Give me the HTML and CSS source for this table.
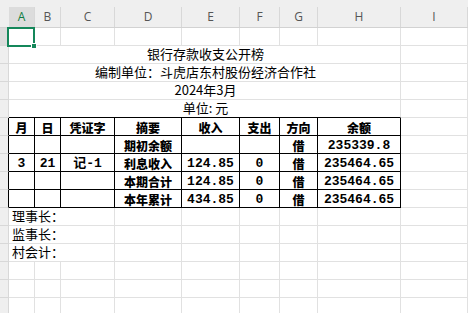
FILE: index.html
```html
<!DOCTYPE html>
<html>
<head>
<meta charset="utf-8">
<link rel="stylesheet" href="styles.css">
</head>
<body>
<div class="sheet">
  <!-- header -->
  <div class="corner"></div>
  <div class="ch act"><div class="lbl">A</div></div>
  <div class="ch"><div class="lbl">B</div></div>
  <div class="ch"><div class="lbl">C</div></div>
  <div class="ch"><div class="lbl">D</div></div>
  <div class="ch"><div class="lbl">E</div></div>
  <div class="ch"><div class="lbl">F</div></div>
  <div class="ch"><div class="lbl">G</div></div>
  <div class="ch"><div class="lbl">H</div></div>
  <div class="ch"><div class="lbl">I</div></div>

  <!-- row 1 -->
  <div class="rh act"></div>
  <div class="c a1"><div class="selbox"><div class="handle"></div></div></div>
  <div class="c"></div><div class="c"></div><div class="c"></div><div class="c"></div><div class="c"></div><div class="c"></div><div class="c"></div><div class="c"></div>

  <!-- row 2 -->
  <div class="rh"></div>
  <div class="c m ttl">银行存款收支公开榜</div>
  <div class="c"></div>
  <!-- row 3 -->
  <div class="rh"></div>
  <div class="c m ttl">编制单位：斗虎店东村股份经济合作社</div>
  <div class="c"></div>
  <!-- row 4 -->
  <div class="rh"></div>
  <div class="c m ttl">2024年3月</div>
  <div class="c"></div>
  <!-- row 5 -->
  <div class="rh"></div>
  <div class="c m ttl last">单位: 元</div>
  <div class="c"></div>

  <!-- row 6 table header -->
  <div class="rh tb"></div>
  <div class="t">月</div><div class="t">日</div><div class="t">凭证字</div><div class="t">摘要</div><div class="t">收入</div><div class="t">支出</div><div class="t">方向</div><div class="t">余额</div>
  <div class="c"></div>
  <!-- row 7 -->
  <div class="rh tb"></div>
  <div class="t"></div><div class="t"></div><div class="t"></div><div class="t">期初余额</div><div class="t"></div><div class="t"></div><div class="t">借</div><div class="t num">235339.8</div>
  <div class="c"></div>
  <!-- row 8 -->
  <div class="rh tb"></div>
  <div class="t num">3</div><div class="t num">21</div><div class="t num">记-1</div><div class="t">利息收入</div><div class="t num">124.85</div><div class="t num">0</div><div class="t">借</div><div class="t num">235464.65</div>
  <div class="c"></div>
  <!-- row 9 -->
  <div class="rh tb"></div>
  <div class="t"></div><div class="t"></div><div class="t"></div><div class="t">本期合计</div><div class="t num">124.85</div><div class="t num">0</div><div class="t">借</div><div class="t num">235464.65</div>
  <div class="c"></div>
  <!-- row 10 -->
  <div class="rh tb"></div>
  <div class="t"></div><div class="t"></div><div class="t"></div><div class="t">本年累计</div><div class="t num">434.85</div><div class="t num">0</div><div class="t">借</div><div class="t num">235464.65</div>
  <div class="c"></div>

  <!-- row 11 -->
  <div class="rh"></div>
  <div class="c sig">理事长：</div>
  <div class="c"></div><div class="c"></div><div class="c"></div><div class="c"></div><div class="c"></div><div class="c"></div>
  <!-- row 12 -->
  <div class="rh"></div>
  <div class="c sig">监事长：</div>
  <div class="c"></div><div class="c"></div><div class="c"></div><div class="c"></div><div class="c"></div><div class="c"></div>
  <!-- row 13 -->
  <div class="rh"></div>
  <div class="c sig">村会计：</div>
  <div class="c"></div><div class="c"></div><div class="c"></div><div class="c"></div><div class="c"></div><div class="c"></div>

  <!-- rows 14-16 -->
  <div class="rh"></div>
  <div class="c"></div><div class="c"></div><div class="c"></div><div class="c"></div><div class="c"></div><div class="c"></div><div class="c"></div><div class="c"></div><div class="c"></div>
  <div class="rh"></div>
  <div class="c"></div><div class="c"></div><div class="c"></div><div class="c"></div><div class="c"></div><div class="c"></div><div class="c"></div><div class="c"></div><div class="c"></div>
  <div class="rh"></div>
  <div class="c"></div><div class="c"></div><div class="c"></div><div class="c"></div><div class="c"></div><div class="c"></div><div class="c"></div><div class="c"></div><div class="c"></div>
</div>
</body>
</html>
```

FILE: styles.css
```css
* { box-sizing: border-box; }
html, body {
  margin: 0;
  padding: 0;
  width: 468px;
  height: 313px;
  overflow: hidden;
  background: #ffffff;
}
.sheet {
  display: grid;
  grid-template-columns: 9px 26px 26px 54px 67px 58px 40px 38px 83px 67px;
  grid-template-rows: 28px;
  grid-auto-rows: 18px;
  height: 313px;
  overflow: hidden;
  font-family: "Noto Sans CJK SC", sans-serif;
  color: #000;
}
.corner {
  background: #efefef;
  border-bottom: 1px solid #d2d2d2;
}
.ch {
  background: #efefef;
  border-bottom: 1px solid #d2d2d2;
  padding-top: 7px;
}
.ch .lbl {
  height: 20px;
  border-right: 1px solid #d8d8d8;
  text-align: center;
  font-family: "Open Sans", "Noto Sans", sans-serif;
  font-size: 12px;
  line-height: 20px;
  color: #555555;
}
.ch.act .lbl {
  background: #dcdcdc;
  color: #107c41;
}
.rh {
  background: #efefef;
  border-right: 1px solid #d8d8d8;
  border-bottom: 1px solid #d8d8d8;
}
.rh.act { background: #dcdcdc; }
.rh.tb { border-right-color: #000; }
.c {
  border-right: 1px solid #e1e1e1;
  border-bottom: 1px solid #e1e1e1;
  white-space: nowrap;
  overflow: visible;
}
.a1 { position: relative; }
.selbox {
  position: absolute;
  left: -2px;
  top: -1px;
  width: 28px;
  height: 20px;
  border: 2px solid #14875a;
  z-index: 2;
}
.handle {
  position: absolute;
  right: -4px;
  bottom: -4px;
  width: 6px;
  height: 6px;
  background: #14875a;
  border: 1px solid #ffffff;
}
.m {
  grid-column: span 8;
  display: flex;
  justify-content: center;
  align-items: flex-end;
}
.ttl {
  font-size: 13px;
  line-height: 16px;
  padding-bottom: 1px;
  padding-left: 2px;
}
.m.last { border-bottom-color: #000; }
.t {
  border-right: 1px solid #000;
  border-bottom: 1px solid #000;
  display: flex;
  justify-content: center;
  align-items: center;
  font-weight: 900;
  font-size: 12px;
  line-height: 14px;
  padding-top: 2px;
  white-space: nowrap;
  overflow: hidden;
}
.num {
  font-family: "Liberation Mono", "Noto Sans CJK SC", monospace;
  font-weight: bold;
  font-size: 13px;
}
.sig {
  grid-column: span 3;
  font-size: 13px;
  line-height: 16px;
  padding-left: 3px;
  display: flex;
  align-items: flex-end;
  padding-bottom: 1px;
}
```
